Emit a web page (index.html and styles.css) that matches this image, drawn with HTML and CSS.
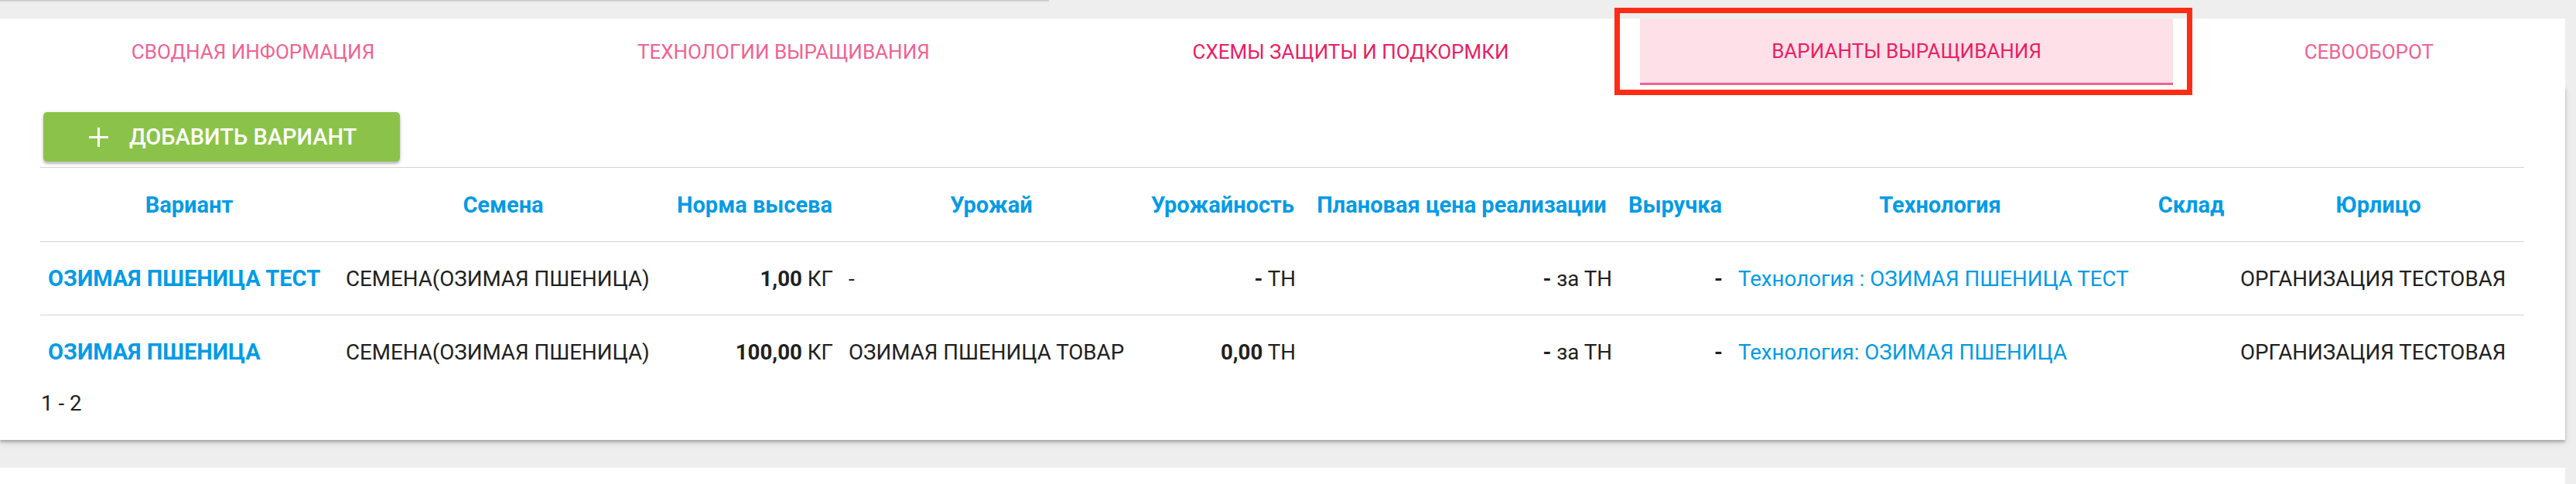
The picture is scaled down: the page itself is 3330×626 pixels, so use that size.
FILE: index.html
```html
<!DOCTYPE html>
<html lang="ru">
<head>
    <meta charset="UTF-8">
    <meta name="viewport" content="width=device-width, initial-scale=1.0">
    <title>Варианты выращивания</title>
    <link rel="stylesheet" href="styles.css">
</head>
<body>
    <div class="top-edge"></div>

    <!-- Tabs -->
    <nav class="tabs">
        <a class="tab">СВОДНАЯ ИНФОРМАЦИЯ</a>
        <a class="tab">ТЕХНОЛОГИИ ВЫРАЩИВАНИЯ</a>
        <a class="tab tab-hover">СХЕМЫ ЗАЩИТЫ И ПОДКОРМКИ</a>
        <a class="tab tab-active">ВАРИАНТЫ ВЫРАЩИВАНИЯ</a>
        <a class="tab">СЕВООБОРОТ</a>
    </nav>

    <div class="card">
        <button class="add-btn">
            <svg class="add-icon" width="25" height="25" viewBox="0 0 25 25">
                <path d="M12.5 0 V25 M0 12.5 H25" stroke="#fff" stroke-width="3" fill="none"/>
            </svg>
            ДОБАВИТЬ ВАРИАНТ
        </button>

        <table class="variants">
            <colgroup>
                <col class="c-variant">
                <col class="c-seeds">
                <col class="c-rate">
                <col class="c-harvest">
                <col class="c-yield">
                <col class="c-price">
                <col class="c-revenue">
                <col class="c-tech">
                <col class="c-store">
                <col class="c-company">
            </colgroup>
            <thead>
                <tr>
                    <th>Вариант</th>
                    <th>Семена</th>
                    <th>Норма высева</th>
                    <th>Урожай</th>
                    <th>Урожайность</th>
                    <th>Плановая цена реализации</th>
                    <th>Выручка</th>
                    <th>Технология</th>
                    <th>Склад</th>
                    <th>Юрлицо</th>
                </tr>
            </thead>
            <tbody>
                <tr>
                    <td><a class="variant-link">ОЗИМАЯ ПШЕНИЦА ТЕСТ</a></td>
                    <td>СЕМЕНА(ОЗИМАЯ ПШЕНИЦА)</td>
                    <td class="num"><b>1,00</b> КГ</td>
                    <td>-</td>
                    <td class="num"><b>-</b> ТН</td>
                    <td class="num"><b>-</b> за ТН</td>
                    <td class="num"><b>-</b></td>
                    <td><a class="tech-link">Технология : ОЗИМАЯ ПШЕНИЦА ТЕСТ</a></td>
                    <td></td>
                    <td>ОРГАНИЗАЦИЯ ТЕСТОВАЯ</td>
                </tr>
                <tr>
                    <td><a class="variant-link">ОЗИМАЯ ПШЕНИЦА</a></td>
                    <td>СЕМЕНА(ОЗИМАЯ ПШЕНИЦА)</td>
                    <td class="num"><b>100,00</b> КГ</td>
                    <td>ОЗИМАЯ ПШЕНИЦА ТОВАР</td>
                    <td class="num"><b>0,00</b> ТН</td>
                    <td class="num"><b>-</b> за ТН</td>
                    <td class="num"><b>-</b></td>
                    <td><a class="tech-link">Технология: ОЗИМАЯ ПШЕНИЦА</a></td>
                    <td></td>
                    <td>ОРГАНИЗАЦИЯ ТЕСТОВАЯ</td>
                </tr>
            </tbody>
        </table>

        <div class="pager">1 - 2</div>
    </div>

    <div class="next-card"></div>

    <!-- annotation frame over the active tab -->
    <div class="highlight"></div>
</body>
</html>
```

FILE: styles.css
```css
/* General */
body {
    margin: 0;
    position: relative;
    background: #eeeeee;
    font-family: Roboto, "Liberation Sans", sans-serif;
    color: #212121;
}

.top-edge {
    width: 1356px;
    height: 3px;
    background: linear-gradient(#c4c4c4, #eeeeee);
}

/* Tabs */
.tabs {
    position: relative;
    z-index: 1;
    display: flex;
    width: 3316px;
    height: 88px;
    margin-top: 21px;
    padding-bottom: 2px;
    box-sizing: border-box;
    background: #fff;
}

.tab {
    flex: 1 1 auto;
    display: flex;
    align-items: center;
    justify-content: center;
    font-size: 26px;
    color: #f06292;
    white-space: nowrap;
    cursor: pointer;
}

.tab-hover {
    color: #e91e63;
}

.tab-active {
    color: #e91e63;
    background: #fde0e8;
    border-bottom: 3px solid #f06292;
}

/* Card */
.card {
    width: 3316px;
    box-sizing: border-box;
    padding: 33px 53px 27px 52px;
    background: #fff;
    box-shadow: 0 3px 3px rgba(0, 0, 0, 0.22), 0 4px 10px rgba(0, 0, 0, 0.1);
}

.add-btn {
    display: flex;
    align-items: center;
    height: 64px;
    margin-left: 4px;
    padding: 0 56px 0 59px;
    border: none;
    border-radius: 5px;
    background: #8bc34a;
    color: #fff;
    font-family: Roboto, "Liberation Sans", sans-serif;
    font-size: 29px;
    font-weight: 500;
    box-shadow: 0 3px 3px rgba(0, 0, 0, 0.2), 0 1px 6px rgba(0, 0, 0, 0.12);
    cursor: pointer;
}

.add-icon {
    margin-right: 27px;
}

/* Table */
.variants {
    width: 3211px;
    margin-top: 7px;
    table-layout: fixed;
    border-collapse: separate;
    border-spacing: 0;
    border-top: 1px solid #d4d4d4;
}

.c-variant { width: 385px; }
.c-seeds { width: 427px; }
.c-rate { width: 223px; }
.c-harvest { width: 389px; }
.c-yield { width: 209px; }
.c-price { width: 409px; }
.c-revenue { width: 143px; }
.c-tech { width: 542px; }
.c-store { width: 107px; }
.c-company { width: 377px; }

.variants th,
.variants td {
    padding: 0 10px;
    white-space: nowrap;
    vertical-align: middle;
}

.variants th {
    height: 95px;
    border-bottom: 1px solid #d4d4d4;
    font-size: 29px;
    font-weight: 700;
    color: #039be5;
    text-align: center;
}

.variants td {
    height: 94px;
    font-size: 27.7px;
    text-align: left;
}

.variants tbody tr:first-child td {
    border-bottom: 1px solid #d4d4d4;
}

.variants td.num {
    text-align: right;
}

.variant-link {
    font-size: 29px;
    font-weight: 700;
    color: #039be5;
    cursor: pointer;
}

.tech-link {
    color: #039be5;
    cursor: pointer;
}

.pager {
    height: 40px;
    line-height: 40px;
    font-size: 27.7px;
    margin-left: 1px;
}

.next-card {
    width: 3316px;
    height: 40px;
    margin-top: 36px;
    background: #fff;
}

/* Annotation */
.highlight {
    position: absolute;
    z-index: 2;
    left: 2087px;
    top: 10px;
    width: 747px;
    height: 113px;
    box-sizing: border-box;
    border: 7px solid #fd2c15;
}
```
